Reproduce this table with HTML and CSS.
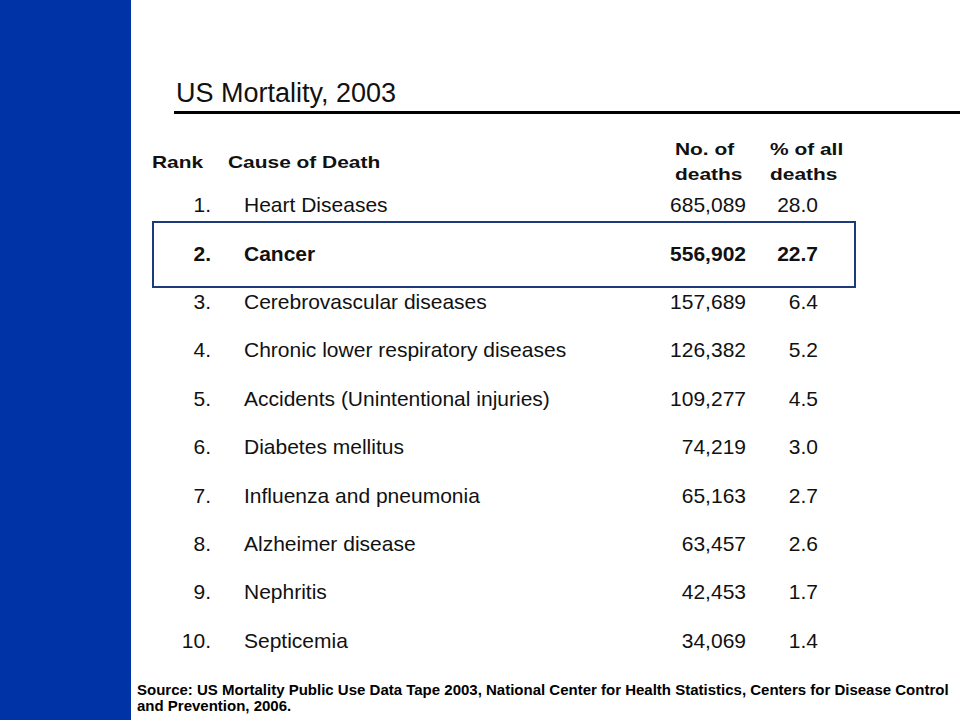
FILE: index.html
```html
<!DOCTYPE html>
<html>
<head>
<meta charset="utf-8">
<title>US Mortality, 2003</title>
<link rel="stylesheet" href="styles.css">
</head>
<body>
<div class="slide">
  <div class="sidebar"></div>
  <main class="main">
    <h1 class="title">US Mortality, 2003</h1>
    <div class="thead">
      <div class="th"><span class="wide">Rank</span></div>
      <div class="th"><span class="wide">Cause of Death</span></div>
      <div class="th"><span class="wide">No. of<br>deaths</span></div>
      <div class="th"><span class="wide">% of all<br>deaths</span></div>
    </div>
    <div class="list">
      <div class="row"><span class="rank">1.</span><span class="cause">Heart Diseases</span><span class="num">685,089</span><span class="pct">28.0</span></div>
      <div class="row hl"><span class="rank">2.</span><span class="cause">Cancer</span><span class="num">556,902</span><span class="pct">22.7</span></div>
      <div class="row"><span class="rank">3.</span><span class="cause">Cerebrovascular diseases</span><span class="num">157,689</span><span class="pct">6.4</span></div>
      <div class="row"><span class="rank">4.</span><span class="cause">Chronic lower respiratory diseases</span><span class="num">126,382</span><span class="pct">5.2</span></div>
      <div class="row"><span class="rank">5.</span><span class="cause">Accidents (Unintentional injuries)</span><span class="num">109,277</span><span class="pct">4.5</span></div>
      <div class="row"><span class="rank">6.</span><span class="cause">Diabetes mellitus</span><span class="num">74,219</span><span class="pct">3.0</span></div>
      <div class="row"><span class="rank">7.</span><span class="cause">Influenza and pneumonia</span><span class="num">65,163</span><span class="pct">2.7</span></div>
      <div class="row"><span class="rank">8.</span><span class="cause">Alzheimer disease</span><span class="num">63,457</span><span class="pct">2.6</span></div>
      <div class="row"><span class="rank">9.</span><span class="cause">Nephritis</span><span class="num">42,453</span><span class="pct">1.7</span></div>
      <div class="row"><span class="rank">10.</span><span class="cause">Septicemia</span><span class="num">34,069</span><span class="pct">1.4</span></div>
    </div>
    <p class="source">Source: US Mortality Public Use Data Tape 2003, National Center for Health Statistics, Centers for Disease Control and Prevention, 2006.</p>
  </main>
</div>
</body>
</html>
```

FILE: styles.css
```css
html, body {
  margin: 0;
  padding: 0;
  background: #fff;
}
body {
  font-family: "Liberation Sans", Arial, sans-serif;
  color: #111;
}
.slide {
  display: flex;
  width: 960px;
  height: 720px;
  overflow: hidden;
}
.sidebar {
  flex: 0 0 131px;
  background: #0034a6;
}
.main {
  flex: 1;
  display: flex;
  flex-direction: column;
}
.title {
  margin: 77px 0 0 43px;
  padding: 0 0 2px 2px;
  font-weight: normal;
  font-size: 27px;
  line-height: 32px;
  border-bottom: 3px solid #000;
}
.thead {
  margin: 23px 0 -6px 21px;
  width: 704px;
  display: grid;
  grid-template-columns: 76px 1fr 95px 86px;
  align-items: center;
  font-weight: bold;
  font-size: 17px;
  line-height: 25px;
}
.th {
  white-space: nowrap;
}
.wide {
  display: inline-block;
  transform: scaleX(1.23);
  transform-origin: left center;
}
.list {
  margin-left: 23px;
  width: 700px;
  display: flex;
  flex-direction: column;
}
.row {
  height: 48.4px;
  display: grid;
  grid-template-columns: 57px 33px 1fr 100px 72px;
  padding-right: 36px;
  align-items: center;
  font-size: 21px;
  line-height: 24px;
}
.rank { grid-column: 1; text-align: right; }
.cause { grid-column: 3; white-space: nowrap; }
.num { grid-column: 4; text-align: right; }
.pct { grid-column: 5; text-align: right; }
.row.hl {
  font-weight: bold;
  border: 2px solid #1d3b7c;
  margin: -8px -2px -10px;
  padding: 6px 36px 8px 0;
}
.source {
  margin: 17px 0 0 6px;
  font-family: "Liberation Sans Narrow", "Arial Narrow", "Liberation Sans", sans-serif;
  font-weight: bold;
  font-size: 15px;
  line-height: 16px;
  color: #000;
}
```
